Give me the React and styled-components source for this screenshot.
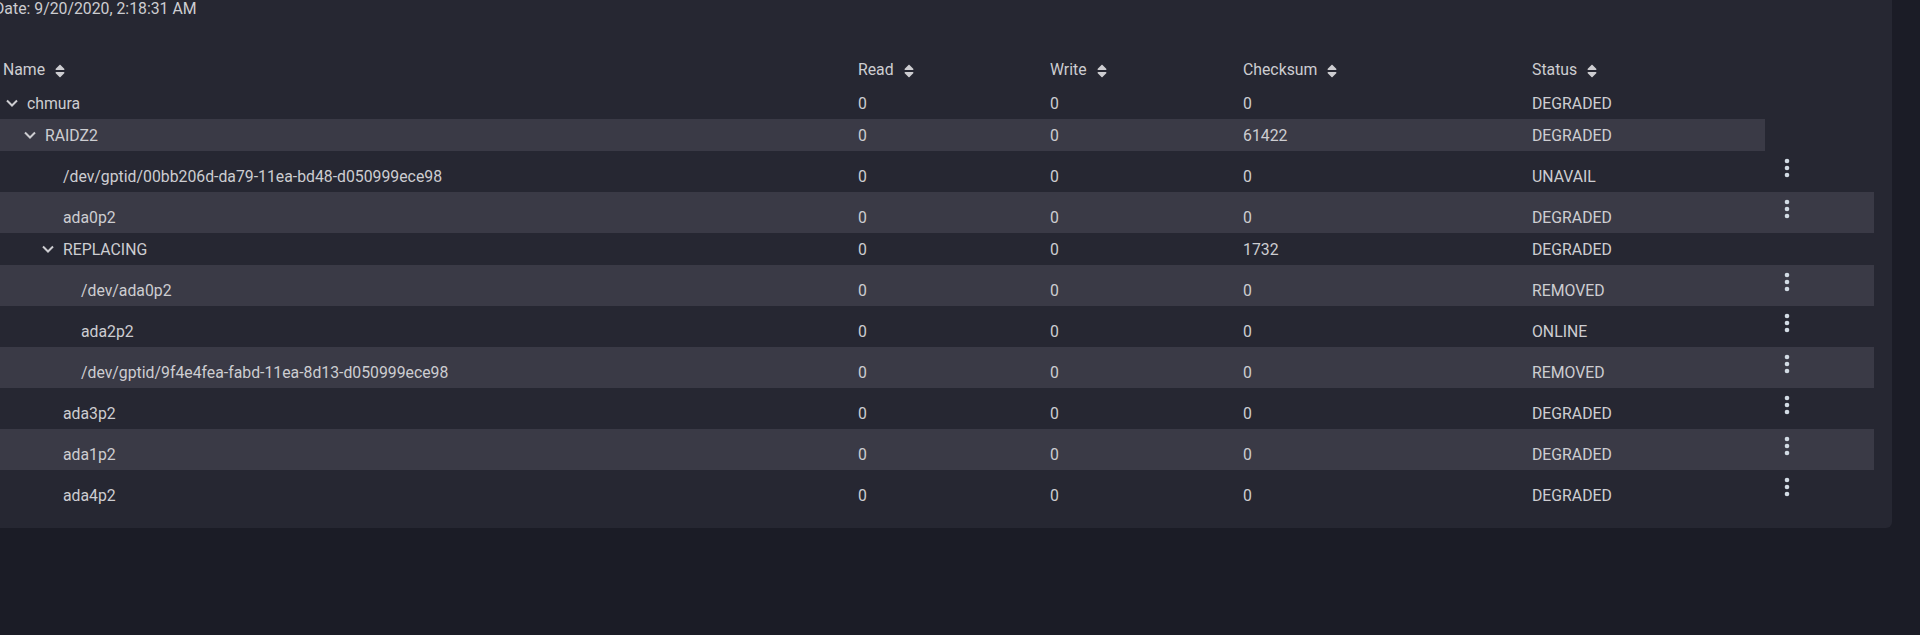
import React from 'react'
import styled, { createGlobalStyle } from 'styled-components'
import { FaSort } from 'react-icons/fa'

const GlobalStyle = createGlobalStyle`
html, body {
    margin: 0;
    height: 100%;
    background: #1b1c26;
    overflow: hidden;
}
#root {
    height: 100%;
}
`

const COLS = '855px 192px 193px 289px 244px 109px'

const Page = styled.div`
height: 100%;
font-family: Roboto, "Liberation Sans", sans-serif;
font-size: 15.8px;
line-height: 18px;
color: #cdcdd1;
`

const Card = styled.div`
margin: -12px 28px 0 -32px;
padding: 12px 18px 17px 24px;
background: #262732;
border-radius: 6px;
`

const DateLine = styled.div`
margin: 0 0 35px 2px;
`

const HeaderRow = styled.div`
display: grid;
grid-template-columns: ${COLS};
height: 34px;
align-items: center;
`

const HeadCell = styled.div`
display: flex;
align-items: center;
gap: 10px;
padding-left: 11px;

svg {
    width: 10px;
    height: 16px;
    margin-top: 2px;
}
`

const Row = styled.div`
display: grid;
grid-template-columns: ${COLS};
min-height: ${props => props.$tall ? 41 : 32}px;
`

const Cell = styled.div`
display: flex;
align-items: flex-end;
padding: 0 0 6px 11px;
background: ${props => props.$striped ? '#3a3a46' : 'transparent'};
`

const NameCell = styled(Cell)`
padding-left: ${props => 11 + props.$level * 18}px;
`

const Chevron = styled.span`
display: flex;
width: 24px;
height: 18px;
align-items: center;
flex-shrink: 0;

svg {
    width: 24px;
    height: 24px;
    margin-top: -2px;
}
`

const ActionCell = styled.div`
background: ${props => props.$striped ? '#3a3a46' : 'transparent'};
padding-left: 10px;
`

const MoreButton = styled.button`
display: flex;
align-items: center;
justify-content: center;
width: 24px;
height: 34px;
padding: 0;
border: none;
background: none;
color: #d2dbe4;
cursor: pointer;
`

const ChevronIcon = () => (
    <svg viewBox="0 0 24 24">
        <polyline points="4,9.5 9,14.5 14,9.5" fill="none" stroke="currentColor" strokeWidth="2" />
    </svg>
)

const DotsIcon = () => (
    <svg width="24" height="24" viewBox="0 0 24 24" fill="currentColor">
        <circle cx="12" cy="5" r="2.3" />
        <circle cx="12" cy="12" r="2.3" />
        <circle cx="12" cy="19" r="2.3" />
    </svg>
)

const rows = [
    { name: 'chmura', level: 0, open: true, read: 0, write: 0, checksum: 0, status: 'DEGRADED' },
    { name: 'RAIDZ2', level: 1, open: true, read: 0, write: 0, checksum: 61422, status: 'DEGRADED' },
    { name: '/dev/gptid/00bb206d-da79-11ea-bd48-d050999ece98', level: 2, read: 0, write: 0, checksum: 0, status: 'UNAVAIL', disk: true },
    { name: 'ada0p2', level: 2, read: 0, write: 0, checksum: 0, status: 'DEGRADED', disk: true },
    { name: 'REPLACING', level: 2, open: true, read: 0, write: 0, checksum: 1732, status: 'DEGRADED' },
    { name: '/dev/ada0p2', level: 3, read: 0, write: 0, checksum: 0, status: 'REMOVED', disk: true },
    { name: 'ada2p2', level: 3, read: 0, write: 0, checksum: 0, status: 'ONLINE', disk: true },
    { name: '/dev/gptid/9f4e4fea-fabd-11ea-8d13-d050999ece98', level: 3, read: 0, write: 0, checksum: 0, status: 'REMOVED', disk: true },
    { name: 'ada3p2', level: 2, read: 0, write: 0, checksum: 0, status: 'DEGRADED', disk: true },
    { name: 'ada1p2', level: 2, read: 0, write: 0, checksum: 0, status: 'DEGRADED', disk: true },
    { name: 'ada4p2', level: 2, read: 0, write: 0, checksum: 0, status: 'DEGRADED', disk: true },
]

const headers = ['Name', 'Read', 'Write', 'Checksum', 'Status']

export default function App() {
    return (
        <Page>
            <GlobalStyle />
            <Card>
                <DateLine>Date: 9/20/2020, 2:18:31 AM</DateLine>

                <HeaderRow>
                    {headers.map(h => (
                        <HeadCell key={h}>
                            {h}
                            <FaSort />
                        </HeadCell>
                    ))}
                </HeaderRow>

                {rows.map((row, i) => {
                    const striped = i % 2 === 1
                    return (
                        <Row key={row.name + i} $tall={row.disk}>
                            <NameCell $level={row.level} $striped={striped}>
                                <Chevron>{row.open && <ChevronIcon />}</Chevron>
                                {row.name}
                            </NameCell>
                            <Cell $striped={striped}>{row.read}</Cell>
                            <Cell $striped={striped}>{row.write}</Cell>
                            <Cell $striped={striped}>{row.checksum}</Cell>
                            <Cell $striped={striped}>{row.status}</Cell>
                            {row.disk && (
                                <ActionCell $striped={striped}>
                                    <MoreButton><DotsIcon /></MoreButton>
                                </ActionCell>
                            )}
                        </Row>
                    )
                })}
            </Card>
        </Page>
    )
}
